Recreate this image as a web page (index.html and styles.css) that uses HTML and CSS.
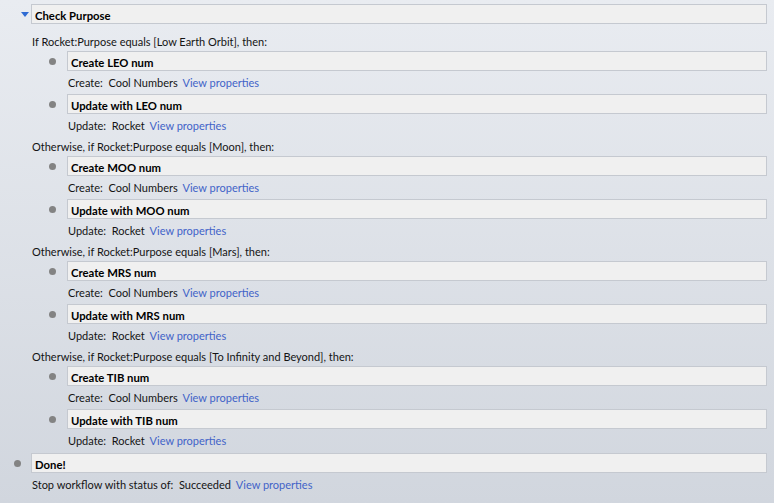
FILE: index.html
```html
<!DOCTYPE html>
<html lang="en">
<head>
  <meta charset="UTF-8">
  <meta name="viewport" content="width=device-width, initial-scale=1.0">
  <link rel="stylesheet" href="styles.css">
  <title>Workflow</title>
</head>
<body>

  <div class="flow">
    <div class="step top">
      <div class="marker"><span class="toggle"></span></div>
      <div class="box">Check Purpose</div>
    </div>

    <div class="branch first">
      <div class="cond">If Rocket:Purpose equals [Low Earth Orbit], then:</div>
      <div class="step inner">
        <div class="marker"><span class="dot"></span></div>
        <div class="box">Create LEO num</div>
      </div>
      <div class="desc">Create:&nbsp; Cool Numbers <a href="#">View properties</a></div>
      <div class="step inner">
        <div class="marker"><span class="dot"></span></div>
        <div class="box">Update with LEO num</div>
      </div>
      <div class="desc">Update:&nbsp; Rocket <a href="#">View properties</a></div>
    </div>

    <div class="branch">
      <div class="cond">Otherwise, if Rocket:Purpose equals [Moon], then:</div>
      <div class="step inner">
        <div class="marker"><span class="dot"></span></div>
        <div class="box">Create MOO num</div>
      </div>
      <div class="desc">Create:&nbsp; Cool Numbers <a href="#">View properties</a></div>
      <div class="step inner">
        <div class="marker"><span class="dot"></span></div>
        <div class="box">Update with MOO num</div>
      </div>
      <div class="desc">Update:&nbsp; Rocket <a href="#">View properties</a></div>
    </div>

    <div class="branch">
      <div class="cond">Otherwise, if Rocket:Purpose equals [Mars], then:</div>
      <div class="step inner">
        <div class="marker"><span class="dot"></span></div>
        <div class="box">Create MRS num</div>
      </div>
      <div class="desc">Create:&nbsp; Cool Numbers <a href="#">View properties</a></div>
      <div class="step inner">
        <div class="marker"><span class="dot"></span></div>
        <div class="box">Update with MRS num</div>
      </div>
      <div class="desc">Update:&nbsp; Rocket <a href="#">View properties</a></div>
    </div>

    <div class="branch">
      <div class="cond">Otherwise, if Rocket:Purpose equals [To Infinity and Beyond], then:</div>
      <div class="step inner">
        <div class="marker"><span class="dot"></span></div>
        <div class="box">Create TIB num</div>
      </div>
      <div class="desc">Create:&nbsp; Cool Numbers <a href="#">View properties</a></div>
      <div class="step inner">
        <div class="marker"><span class="dot"></span></div>
        <div class="box">Update with TIB num</div>
      </div>
      <div class="desc">Update:&nbsp; Rocket <a href="#">View properties</a></div>
    </div>

    <div class="step top done">
      <div class="marker"><span class="dot"></span></div>
      <div class="box">Done!</div>
    </div>
    <div class="desc outer">Stop workflow with status of:&nbsp; Succeeded <a href="#">View properties</a></div>
  </div>

</body>
</html>
```

FILE: styles.css
```css
* {
  margin: 0;
  padding: 0;
  box-sizing: border-box;
}

html,
body {
  height: 100%;
}

body {
  background: linear-gradient(to bottom, #e9ecf1, #d1d6de);
  font-family: Lato, 'Open Sans', sans-serif;
  font-size: 11px;
  color: #141414;
  overflow: hidden;
}

.flow {
  padding: 4px 7px 0 0;
}

.step {
  display: flex;
  align-items: center;
  height: 20px;
}

.marker {
  display: flex;
  align-items: center;
  justify-content: flex-end;
  height: 100%;
}

.top .marker {
  width: 31px;
  padding-right: 10px;
}

.step.top:first-child .marker {
  padding-right: 2px;
}

.inner .marker {
  width: 67px;
  padding-right: 11px;
}

.toggle {
  width: 0;
  height: 0;
  border-left: 4px solid transparent;
  border-right: 4px solid transparent;
  border-top: 5px solid #2f6bd3;
  margin-top: 1px;
}

.dot {
  width: 7px;
  height: 7px;
  border-radius: 50%;
  background: #838383;
}

.box {
  flex: 1;
  height: 100%;
  background: #f0f0f0;
  border: 1px solid #c5c9d0;
  font-weight: bold;
  font-size: 11.3px;
  color: #000;
  padding: 1px 0 0 3px;
  line-height: 19px;
}

.branch.first {
  margin-top: 8px;
}

.cond {
  height: 19px;
  line-height: 19px;
  padding-left: 32px;
}

.desc {
  height: 23px;
  line-height: 23px;
  padding-left: 68px;
}

.done {
  margin-top: 1px;
}

.desc.outer {
  padding-left: 32px;
}

.desc a {
  color: #4263c8;
  text-decoration: none;
  margin-left: 2px;
}
```
